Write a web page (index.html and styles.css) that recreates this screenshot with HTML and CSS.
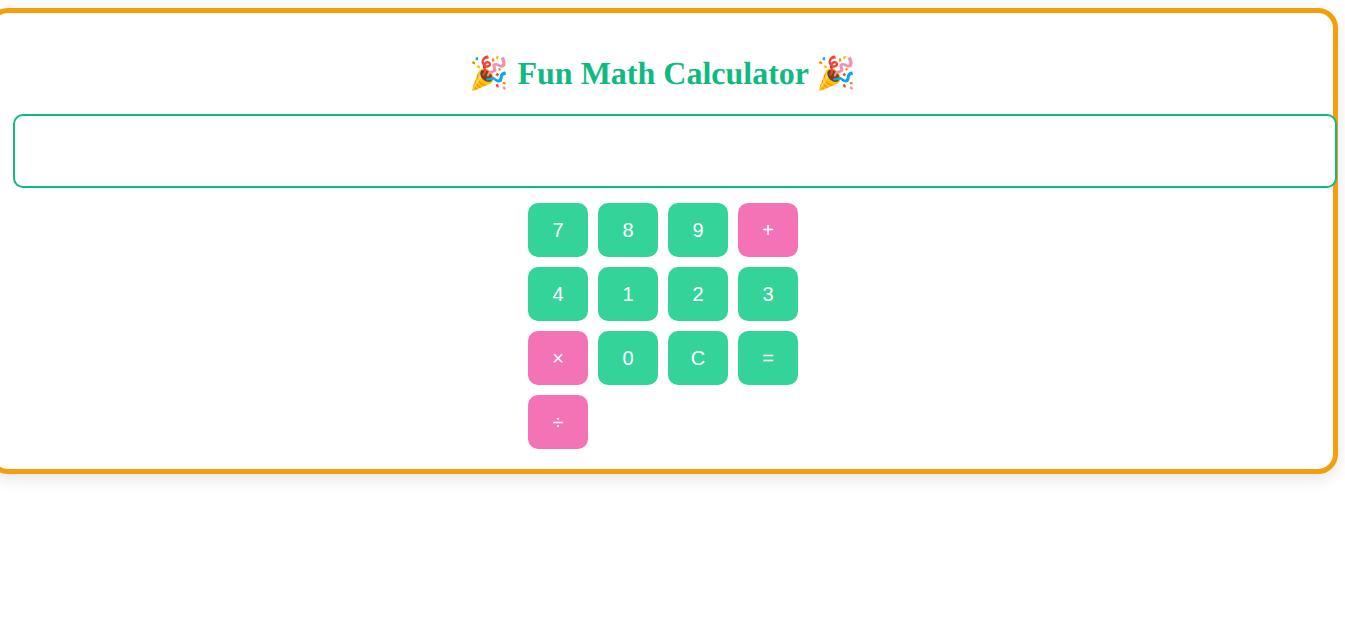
FILE: index.html
```html
<!DOCTYPE html>
<html lang="en">
<head>
<meta charset="utf-8">
<title>Fun Math Calculator</title>
<link rel="stylesheet" href="styles.css">
</head>
<body>
<main class="calculator">
  <h1 class="title">🎉 Fun Math Calculator 🎉</h1>
  <input class="display" type="text" aria-label="Result" readonly>
  <div class="buttons">
    <button class="key">7</button>
    <button class="key">8</button>
    <button class="key">9</button>
    <button class="key operator">+</button>
    <button class="key">4</button>
    <button class="key">1</button>
    <button class="key">2</button>
    <button class="key">3</button>
    <button class="key operator">×</button>
    <button class="key">0</button>
    <button class="key">C</button>
    <button class="key">=</button>
    <button class="key operator">÷</button>
  </div>
</main>
</body>
</html>
```

FILE: styles.css
```css
body {
  box-sizing: border-box;
  min-height: 100vh;
  margin: 0;
  padding: 8px 7px 8px 0;
  background: #fff;
  font-family: "Liberation Serif", "Times New Roman", serif;
}

.calculator {
  margin-left: -12px;
  padding: 20px 0;
  border: 5px solid #f59e0b;
  border-radius: 20px;
  background: #fff;
  box-shadow: 0 5px 15px rgba(0, 0, 0, 0.1);
  text-align: center;
}

.title {
  margin: 21px 0 22px;
  color: #10b981;
  font-size: 32px;
  line-height: 38px;
  text-rendering: geometricPrecision;
}

.display {
  display: block;
  box-sizing: border-box;
  width: calc(100% - 16px);
  height: 74px;
  margin: 0 0 15px 20px;
  padding: 10px;
  border: 2px solid #10b981;
  border-radius: 10px;
  background: #fff;
  font-size: 24px;
  text-align: right;
}

.buttons {
  display: grid;
  grid-template-columns: repeat(4, 60px);
  gap: 10px;
  justify-content: center;
}

.key {
  padding: 15px;
  border: none;
  border-radius: 10px;
  background: #34d399;
  color: #fff;
  font-family: "Liberation Sans", Arial, sans-serif;
  font-size: 20px;
  line-height: 24px;
}

.operator {
  background: #f472b6;
}
```
